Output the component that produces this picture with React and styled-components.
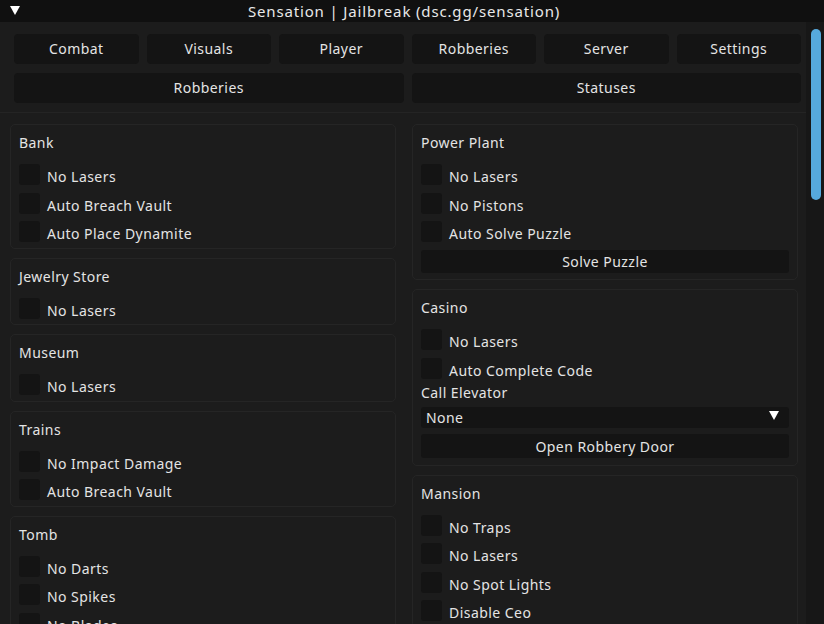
import React from "react";
import styled, { createGlobalStyle } from "styled-components";

const GlobalStyle = createGlobalStyle`
  html, body {
    margin: 0;
    padding: 0;
    background: #1c1c1c;
    overflow: hidden;
  }
  * {
    box-sizing: border-box;
  }
`;

const Window = styled.div`
  width: 824px;
  height: 624px;
  display: flex;
  flex-direction: column;
  background: #1c1c1c;
  color: #e4e4e4;
  font-family: "Noto Sans", "DejaVu Sans", sans-serif;
  font-size: 14px;
  letter-spacing: 0.45px;
  overflow: hidden;
`;

const TitleBar = styled.div`
  height: 22px;
  flex: none;
  background: #101010;
  position: relative;
  display: flex;
  align-items: center;
  justify-content: center;
  padding-right: 16px;
  font-size: 15px;
  letter-spacing: 0.85px;
  color: #e8e8e8;
`;

const Collapse = styled.div`
  position: absolute;
  left: 10px;
  top: 6px;
  width: 0;
  height: 0;
  border-left: 5px solid transparent;
  border-right: 5px solid transparent;
  border-top: 9px solid #ffffff;
`;

const Body = styled.div`
  flex: 1;
  display: flex;
  min-height: 0;
`;

const Main = styled.div`
  flex: 1;
  min-width: 0;
  display: flex;
  flex-direction: column;
`;

const Scrollbar = styled.div`
  width: 18px;
  flex: none;
  background: #171717;
  padding: 7px 3px 0 5px;
`;

const Thumb = styled.div`
  height: 171px;
  border-radius: 5px;
  background: #56a9dd;
`;

const TabArea = styled.div`
  padding: 12px 5px 9px 14px;
  border-bottom: 1px solid #242424;
  display: flex;
  flex-direction: column;
  gap: 9px;
`;

const TabRow = styled.div`
  display: grid;
  grid-template-columns: repeat(${(p) => p.$cols}, 1fr);
  gap: 8px;
`;

const Tab = styled.div`
  height: 30px;
  padding-bottom: 2px;
  background: #141414;
  border-radius: 4px;
  display: flex;
  align-items: center;
  justify-content: center;
`;

const Columns = styled.div`
  display: grid;
  grid-template-columns: 386px 386px;
  gap: 16px;
  padding: 11px 0 0 10px;
  align-items: start;
`;

const Column = styled.div`
  display: flex;
  flex-direction: column;
  gap: 9px;
`;

const Panel = styled.div`
  border: 1px solid #252525;
  border-radius: 5px;
  padding: 7px 8px 5.5px 8px;
  display: flex;
  flex-direction: column;
`;

const PanelTitle = styled.div`
  height: 20px;
  line-height: 20px;
  margin-top: 1px;
  margin-bottom: 11px;
`;

const Check = styled.div`
  display: flex;
  align-items: center;
  gap: 7px;
  height: 21px;
  margin-bottom: 7.5px;
  &:last-child {
    margin-bottom: 0;
  }
  & span {
    padding-top: 4px;
  }
`;

const Box = styled.div`
  width: 21px;
  height: 21px;
  border-radius: 3px;
  background: #141414;
`;

const Label = styled.div`
  height: 20px;
  line-height: 20px;
  margin: -3.5px 0 4px;
`;

const Select = styled.div`
  height: 21px;
  border-radius: 3px;
  background: #141414;
  display: flex;
  align-items: center;
  justify-content: space-between;
  padding: 1px 10px 0 5px;
  margin-bottom: 6.5px;
`;

const Arrow = styled.div`
  width: 0;
  height: 0;
  border-left: 5px solid transparent;
  border-right: 5px solid transparent;
  border-top: 9px solid #ffffff;
  margin-top: -5px;
`;

const Action = styled.div`
  height: ${(p) => p.$h}px;
  border-radius: 3px;
  background: #141414;
  display: flex;
  align-items: center;
  justify-content: center;
  margin-bottom: 1px;
`;

const CheckItem = ({ label }) => (
  <Check>
    <Box />
    <span>{label}</span>
  </Check>
);

const App = () => {
  return (
    <>
      <GlobalStyle />
      <Window>
        <TitleBar>
          <Collapse />
          Sensation | Jailbreak (dsc.gg/sensation)
        </TitleBar>
        <Body>
          <Main>
            <TabArea>
              <TabRow $cols={6}>
                {["Combat", "Visuals", "Player", "Robberies", "Server", "Settings"].map((t) => (
                  <Tab key={t}>{t}</Tab>
                ))}
              </TabRow>
              <TabRow $cols={2}>
                <Tab>Robberies</Tab>
                <Tab>Statuses</Tab>
              </TabRow>
            </TabArea>
            <Columns>
              <Column>
                <Panel>
                  <PanelTitle>Bank</PanelTitle>
                  <CheckItem label="No Lasers" />
                  <CheckItem label="Auto Breach Vault" />
                  <CheckItem label="Auto Place Dynamite" />
                </Panel>
                <Panel>
                  <PanelTitle>Jewelry Store</PanelTitle>
                  <CheckItem label="No Lasers" />
                </Panel>
                <Panel>
                  <PanelTitle>Museum</PanelTitle>
                  <CheckItem label="No Lasers" />
                </Panel>
                <Panel>
                  <PanelTitle>Trains</PanelTitle>
                  <CheckItem label="No Impact Damage" />
                  <CheckItem label="Auto Breach Vault" />
                </Panel>
                <Panel>
                  <PanelTitle>Tomb</PanelTitle>
                  <CheckItem label="No Darts" />
                  <CheckItem label="No Spikes" />
                  <CheckItem label="No Blades" />
                </Panel>
              </Column>
              <Column>
                <Panel>
                  <PanelTitle>Power Plant</PanelTitle>
                  <CheckItem label="No Lasers" />
                  <CheckItem label="No Pistons" />
                  <CheckItem label="Auto Solve Puzzle" />
                  <Action $h={23}>Solve Puzzle</Action>
                </Panel>
                <Panel>
                  <PanelTitle>Casino</PanelTitle>
                  <CheckItem label="No Lasers" />
                  <CheckItem label="Auto Complete Code" />
                  <Label>Call Elevator</Label>
                  <Select>
                    <span>None</span>
                    <Arrow />
                  </Select>
                  <Action $h={24}>Open Robbery Door</Action>
                </Panel>
                <Panel>
                  <PanelTitle>Mansion</PanelTitle>
                  <CheckItem label="No Traps" />
                  <CheckItem label="No Lasers" />
                  <CheckItem label="No Spot Lights" />
                  <CheckItem label="Disable Ceo" />
                </Panel>
              </Column>
            </Columns>
          </Main>
          <Scrollbar>
            <Thumb />
          </Scrollbar>
        </Body>
      </Window>
    </>
  );
};

export default App;
